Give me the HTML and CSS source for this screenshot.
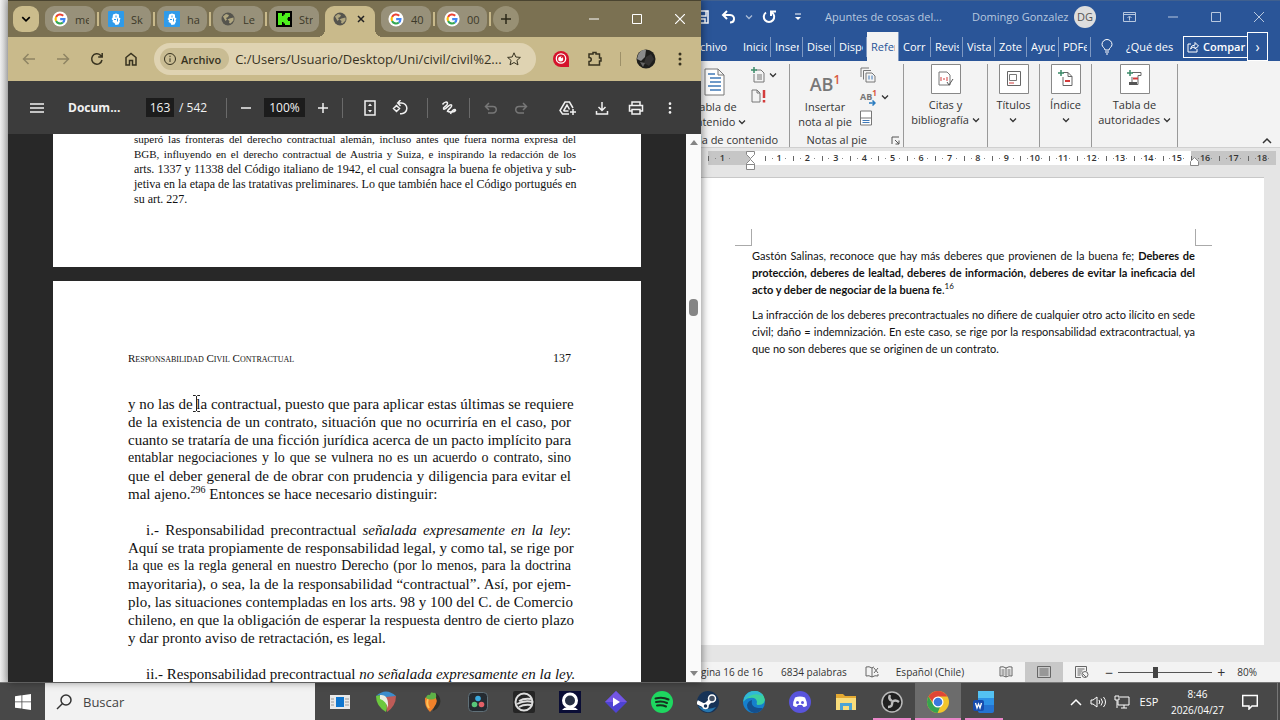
FILE: index.html
```
<!DOCTYPE html>
<html lang="es">
<head>
    <meta charset="UTF-8">
    <meta name="viewport" content="width=device-width, initial-scale=1.0">
    <title>Escritorio</title>
    <link rel="stylesheet" href="styles.css">
</head>
<body>
    <svg class="defs" width="0" height="0" aria-hidden="true">
        <symbol id="google" viewBox="0 0 18 18">
            <circle cx="9" cy="9" r="8.5" fill="#fff"/>
            <g fill="none" stroke-width="2.4">
                <path d="M12.6 5.4A5 5 0 0 0 4.6 6.700" stroke="#ea4335"/>
                <path d="M4.600 6.700A5 5 0 0 0 4.600 11.300" stroke="#fbbc05"/>
                <path d="M4.600 11.300A5 5 0 0 0 12.200 12.900" stroke="#34a853"/>
                <path d="M12.200 12.900A5 5 0 0 0 14 9.200H9.200" stroke="#4285f4"/>
            </g>
        </symbol>
        <symbol id="skeb" viewBox="0 0 16 16">
            <rect width="16" height="16" rx="1" fill="#2f9bea"/>
            <path d="M5 3.500L8 2.500l3 1v3l1.500 1-1 2 .5 1-1.500 3-3 .5-1-2-2-1 .5-1.500-1.500-1.500 1-1z" fill="#fff"/>
            <path d="M8 4.500v2M6 8.500h2M9.500 7.500v3" stroke="#2f9bea"/>
        </symbol>
        <symbol id="globe" viewBox="0 0 16 16">
            <circle cx="8" cy="8" r="6.500" fill="#55544d"/>
            <path d="M3 5.500l3-2.500 3 1-1 2-2 1 1 1.500-1.500 1.500zM9.500 7.500l4-1v3l-3 3-1.500-.5.500-2-2-1.500z" fill="#b0a67f"/>
        </symbol>
        <symbol id="caret" viewBox="0 0 8 8"><path d="M1 2.500l3 3 3-3" fill="none" stroke="currentColor" stroke-width="1.300"/></symbol>
        <symbol id="dots" viewBox="0 0 16 16"><g fill="currentColor"><circle cx="8" cy="3" r="1.500"/><circle cx="8" cy="8" r="1.500"/><circle cx="8" cy="13" r="1.500"/></g></symbol>
    </svg>

    <main class="windows">
        <div class="behind"></div>

        <!-- Chrome -->
        <section class="chrome">
            <div class="tabstrip">
                <button class="tab-search" aria-label="Buscar pestañas"><svg width="10" height="10"><use href="#caret"/></svg></button>
                <button class="tab"><svg width="16" height="16"><use href="#google"/></svg><span>me</span></button>
                <i></i>
                <button class="tab"><svg width="16" height="16"><use href="#skeb"/></svg><span>Sk</span></button>
                <i></i>
                <button class="tab"><svg width="16" height="16"><use href="#skeb"/></svg><span>ha</span></button>
                <i></i>
                <button class="tab"><svg width="16" height="16"><use href="#globe"/></svg><span>Le</span></button>
                <i></i>
                <button class="tab"><svg width="16" height="16" viewBox="0 0 16 16"><path d="M0 0h16v16H0z"/><path d="M2 2h4v3h1.500V3.500H9V2h5v4h-2v1.500h-1v1h1V10h2v4H9v-1.500H7.500V11H6v3H2z" fill="#4df01c"/></svg><span>Str</span></button>
                <div class="tab active">
                    <svg width="16" height="16"><use href="#globe"/></svg>
                    <button aria-label="Cerrar pestaña"><svg width="8" height="8" viewBox="0 0 8 8"><path d="M1 1l6 6M7 1L1 7" stroke="#222" stroke-width="1.500"/></svg></button>
                </div>
                <button class="tab"><svg width="16" height="16"><use href="#google"/></svg><span>40</span></button>
                <i></i>
                <button class="tab"><svg width="16" height="16"><use href="#google"/></svg><span>00</span></button>
                <i></i>
                <button class="new-tab" aria-label="Nueva pestaña"><svg width="10" height="10" viewBox="0 0 10 10"><path d="M5 0v10M0 5h10" stroke="#2b2818" stroke-width="1.500"/></svg></button>
                <div class="controls">
                    <button aria-label="Minimizar"><svg width="10" height="10" viewBox="0 0 10 10"><path d="M0 5h10" stroke="#fff"/></svg></button>
                    <button aria-label="Maximizar"><svg width="10" height="10" viewBox="0 0 10 10"><path d="M.5.500h9v9h-9z" fill="none" stroke="#fff"/></svg></button>
                    <button aria-label="Cerrar"><svg width="10" height="10" viewBox="0 0 10 10"><path d="M0 0l10 10M10 0L0 10" stroke="#fff" stroke-width="1.200"/></svg></button>
                </div>
            </div>

            <div class="navbar">
                <button class="off" aria-label="Atrás"><svg width="16" height="16" viewBox="0 0 16 16"><path d="M14 8H3M7.500 3L2.500 8l5 5" class="line thick"/></svg></button>
                <button class="off" aria-label="Adelante"><svg width="16" height="16" viewBox="0 0 16 16"><path d="M2 8h11M8.500 3l5 5-5 5" class="line thick"/></svg></button>
                <button aria-label="Recargar"><svg width="16" height="16" viewBox="0 0 16 16"><path d="M13 9a5.200 5.200 0 1 1-1.500-4.800L13 5.700M13.200 2v4h-4" class="line thick"/></svg></button>
                <button aria-label="Inicio"><svg width="16" height="16" viewBox="0 0 16 16"><path d="M3 14V6.500L8 2.500l5 4V14H9.500V9.500h-3V14z" class="line thick"/></svg></button>
                <div class="omnibox">
                    <button class="chip"><svg width="14" height="14" viewBox="0 0 14 14"><circle cx="7" cy="7" r="5.500" class="line"/><path d="M7 6.300V10M7 3.700v1.400" class="line"/></svg>Archivo</button>
                    <input type="text" aria-label="Dirección" value="C:/Users/Usuario/Desktop/Uni/civil/civil%2...">
                    <button class="star" aria-label="Marcador"><svg width="16" height="16" viewBox="0 0 16 16"><path d="M8 1.800l1.800 4.200 4.600.4-3.500 3 1.100 4.500L8 11.500l-4 2.400 1.100-4.500-3.500-3 4.600-.4z" class="line"/></svg></button>
                </div>
                <button class="ext" aria-label="Extensión"><svg width="16" height="16" viewBox="0 0 16 16"><path d="M8 0a8 8 0 0 1 8 8v8H8A8 8 0 0 1 8 0z" fill="#d5122b"/><circle cx="8" cy="7.500" r="4.700" fill="none" stroke="#fff" stroke-width="1.300"/><circle cx="7.700" cy="8" r="2.500" fill="#fff"/><path d="M8 7l2.500-2" stroke="#d5122b"/></svg></button>
                <button aria-label="Extensiones"><svg width="18" height="18" viewBox="0 0 18 18"><path d="M3 4h4V2.500h3V4h3.500v4H15v3h-1.500v4H3v-3.500c3 0 3-4 0-4z" class="line thick"/></svg></button>
                <i></i>
                <button aria-label="Perfil"><svg width="20" height="20" viewBox="0 0 20 20"><circle cx="10" cy="10" r="9.500" fill="#1e1e1c"/><path d="M2 6Q5 0 10 1l-1 7-4 4-4-2z" fill="#8a8b8b"/><path d="M10 8l5-3 3 5-5 7-5-3z" fill="#343333"/><path d="M4 13l5 1-2 4z" fill="#666"/></svg></button>
                <button aria-label="Menú"><svg width="16" height="16"><use href="#dots"/></svg></button>
            </div>

            <div class="pdfbar">
                <div class="pdf-name">
                    <button aria-label="Índice"><svg width="14" height="12" viewBox="0 0 14 12"><path d="M0 2h14M0 6h14M0 10h14" class="line thick"/></svg></button>
                    <strong>Docum...</strong>
                </div>
                <div class="pdf-page"><input type="text" aria-label="Página" value="163"><span>/ 542</span></div>
                <i></i>
                <div class="pdf-zoom">
                    <button aria-label="Alejar"><svg width="12" height="12" viewBox="0 0 12 12"><path d="M1 6h10" class="line thick"/></svg></button>
                    <input type="text" aria-label="Zoom" value="100%">
                    <button aria-label="Acercar"><svg width="12" height="12" viewBox="0 0 12 12"><path d="M1 6h10M6 1v10" class="line thick"/></svg></button>
                </div>
                <i></i>
                <div class="pdf-view">
                    <button aria-label="Ajustar"><svg width="16" height="16" viewBox="0 0 16 16"><path d="M3 1h10v14H3z" class="line thick"/><path d="M8 3.500L10 6H6zM8 12.500L10 10H6z" fill="currentColor"/></svg></button>
                    <button aria-label="Girar"><svg width="16" height="16" viewBox="0 0 16 16"><path d="M4.500 5.500L1.500 8.500l3 3 3-3zM6 3h3.500a5.300 5.300 0 0 1 0 10.700H8M8.500 0L5.700 3l2.800 3" class="line thick"/></svg></button>
                </div>
                <i></i>
                <button aria-label="Dibujar"><svg width="16" height="16" viewBox="0 0 16 16"><path d="M1.500 4.500C3 2 6.500 1 6.500 3.500S1.500 7 2.500 9 9 3 10.500 5 5.500 10 6.500 12M9.500 14c1-4 5-6 5-3.500-1 1.500-5 2-7.500 1" class="line thick"/></svg></button>
                <i></i>
                <div class="pdf-view off">
                    <button aria-label="Deshacer"><svg width="14" height="14" viewBox="0 0 14 14"><path d="M4 12h5a3.200 3.200 0 0 0 0-6.500H2M5 2L1.500 5.500 5 9" class="line thick"/></svg></button>
                    <button aria-label="Rehacer"><svg width="14" height="14" viewBox="0 0 14 14"><path d="M10 12H5a3.200 3.200 0 0 1 0-6.500h7M9 2l3.500 3.500L9 9" class="line thick"/></svg></button>
                </div>
                <div class="pdf-actions">
                    <button aria-label="Guardar en Drive"><svg width="18" height="16" viewBox="0 0 18 16"><path d="M10 14H3.500L1 10.500 6 2h4.500l3.500 6M4.500 11h5M4.500 11l3.500-6 2.500 4.500M14 9v6M11 12h6" class="line thick"/></svg></button>
                    <button aria-label="Descargar"><svg width="14" height="14" viewBox="0 0 14 14"><path d="M7 1v8M3.500 6L7 9.500 10.500 6M1.500 10v3h11v-3" class="line thick"/></svg></button>
                    <button aria-label="Imprimir"><svg width="16" height="16" viewBox="0 0 16 16"><path d="M4 5V2h8v3M4 11H1.500V5.500h13V11H12M4 9.500h8V14H4z" class="line thick"/></svg></button>
                    <button aria-label="Más"><svg width="14" height="14"><use href="#dots"/></svg></button>
                </div>
            </div>

            <div class="viewer">
                <div class="pages">
                    <article class="page note">
                        <p>
                            <span class="tight">superó las fronteras del derecho contractual alemán, incluso antes que fuera norma expresa del</span>
                            <span class="tight">BGB, influyendo en el derecho contractual de Austria y Suiza, e inspirando la redacción de los</span>
                            <span>arts. 1337 y 11338 del Código italiano de 1942, el cual consagra la buena fe objetiva y sub-</span>
                            <span>jetiva en la etapa de las tratativas preliminares. Lo que también hace el Código portugués en</span>
                            <span class="end">su art. 227.</span>
                        </p>
                    </article>
                    <article class="page body">
                        <header><span class="caps">Responsabilidad Civil Contractual</span><span>137</span></header>
                        <p>
                            <span>y no las de la contractual, puesto que para aplicar estas últimas se requiere</span>
                            <span>de la existencia de un contrato, situación que no ocurriría en el caso, por</span>
                            <span>cuanto se trataría de una ficción jurídica acerca de un pacto implícito para</span>
                            <span class="tight">entablar negociaciones y lo que se vulnera no es un acuerdo o contrato, sino</span>
                            <span>que el deber general de de obrar con prudencia y diligencia para evitar el</span>
                            <span class="end">mal ajeno.<sup>296</sup> Entonces se hace necesario distinguir:</span>
                        </p>
                        <p>
                            <span class="indent">i.- Responsabilidad precontractual <em>señalada expresamente en la ley</em>:</span>
                            <span>Aquí se trata propiamente de responsabilidad legal, y como tal, se rige por</span>
                            <span class="tight">la que es la regla general en nuestro Derecho (por lo menos, para la doctrina</span>
                            <span>mayoritaria), o sea, la de la responsabilidad “contractual”. Así, por ejem-</span>
                            <span>plo, las situaciones contempladas en los arts. 98 y 100 del C. de Comercio</span>
                            <span>chileno, en que la obligación de esperar la respuesta dentro de cierto plazo</span>
                            <span class="end">y dar pronto aviso de retractación, es legal.</span>
                        </p>
                        <p>
                            <span class="indent">ii.- Responsabilidad precontractual <em>no señalada expresamente en la ley.</em></span>
                        </p>
                        <svg class="cursor" width="9" height="17" viewBox="0 0 9 17"><path d="M1 .5h2.500l1 1 1-1H8M4.500 1v15M1 16.500h2.500l1-1 1 1H8" fill="none" stroke="#222"/></svg>
                    </article>
                </div>
                <div class="scroll"><b class="up"></b><b class="thumb"></b><b class="down"></b></div>
            </div>
        </section>

        <!-- Word -->
        <section class="word">
            <div class="word-title">
                <div class="quick">
                    <button aria-label="Guardar"><svg width="14" height="14" viewBox="0 0 14 14"><path d="M1 1h12v12H1zM3 1v5h8V1M4 13V9h6v4" class="line thick"/></svg></button>
                    <button aria-label="Deshacer"><svg width="16" height="16" viewBox="0 0 16 16"><path d="M6 2L2 6l4 4M2 6h7q4.500.5 4 4.500-.5 3-4 3" fill="none" stroke="#fff" stroke-width="2"/></svg></button>
                    <button aria-label="Opciones de deshacer"><svg width="8" height="8" opacity=".6"><use href="#caret"/></svg></button>
                    <button aria-label="Repetir"><svg width="16" height="16" viewBox="0 0 16 16"><path d="M11 3.500a5.200 5.200 0 1 1-6 0M10 7V2.500h5" fill="none" stroke="#fff" stroke-width="2"/></svg></button>
                    <button aria-label="Personalizar"><svg width="8" height="8" viewBox="0 0 8 8"><path d="M1 1h6" stroke="#fff"/><path d="M1 4h6L4 7z" fill="#fff"/></svg></button>
                </div>
                <span class="file">Apuntes de cosas del...</span>
                <span class="user">Domingo Gonzalez</span>
                <button class="avatar">DG</button>
                <div class="controls">
                    <button aria-label="Opciones de la cinta"><svg width="13" height="10" viewBox="0 0 13 10"><path d="M.5.500h12v9H.5zM.5 2.500h12M6.500 8.500v-4M4.500 6l2-2 2 2" class="line"/></svg></button>
                    <button aria-label="Minimizar"><svg width="10" height="10" viewBox="0 0 10 10"><path d="M0 5h10" class="line"/></svg></button>
                    <button aria-label="Maximizar"><svg width="10" height="10" viewBox="0 0 10 10"><path d="M.5.500h9v9h-9z" class="line"/></svg></button>
                    <button aria-label="Cerrar"><svg width="10" height="10" viewBox="0 0 10 10"><path d="M0 0l10 10M10 0L0 10" class="line"/></svg></button>
                </div>
            </div>

            <nav class="ribbon-tabs">
                <button class="rfile">chivo</button>
                <button class="rtab"><span>Inicio</span></button>
                <button class="rtab"><span>Inser</span></button>
                <button class="rtab"><span>Diseñ</span></button>
                <button class="rtab"><span>Dispo</span></button>
                <button class="rtab current"><span>Refer</span></button>
                <button class="rtab"><span>Corr</span></button>
                <button class="rtab"><span>Revis</span></button>
                <button class="rtab"><span>Vista</span></button>
                <button class="rtab"><span>Zote</span></button>
                <button class="rtab"><span>Ayud</span></button>
                <button class="rtab"><span>PDFe</span></button>
                <button class="tell"><svg width="12" height="16" viewBox="0 0 12 16"><path d="M4 11C4 9 1 8 1 5.500a5 5 0 0 1 10 0C11 8 8 9 8 11zM4 13h4M5 15h2" class="line"/></svg><span>¿Qué des</span></button>
                <button class="share"><svg width="12" height="12" viewBox="0 0 12 12"><path d="M4 3H1v8h9V8M3.500 8Q4 4 8 4V1.500L11.500 5 8 8V6Q5 6 3.500 8z" class="line"/></svg><span>Compar</span></button>
                <button class="more">›</button>
            </nav>

            <div class="ribbon">
                <div class="group toc">
                    <div class="tools">
                        <button class="big toc-big">
                            <svg width="22" height="28" viewBox="0 0 22 28"><path d="M1 1h13l6 6v20H1zM14 1v6h6" fill="#fff" stroke="#777"/><path d="M4 6h7M6 10h11M6 14h11M4 18h13M6 22h11" stroke="#3f79b8" stroke-width="1.500"/></svg>
                            <span>Tabla de<br>contenido <svg width="8" height="8"><use href="#caret"/></svg></span>
                        </button>
                        <div class="small">
                            <button aria-label="Agregar texto"><svg width="14" height="16" viewBox="0 0 14 16"><path d="M5 3h5l3 3v9H3V7M6 8h5M6 10h5M6 12h5" fill="none" stroke="#777"/><path d="M3 0v6M0 3h6" stroke="#3a8a68" stroke-width="1.500"/></svg><svg width="8" height="8"><use href="#caret"/></svg></button>
                            <button aria-label="Actualizar tabla"><svg width="15" height="14" viewBox="0 0 15 14"><path d="M1 1h5l3 3v9H1zM6 1v3h3" fill="none" stroke="#777"/><path d="M13 1v8M13 11v2.500" stroke="#d33c3c" stroke-width="2.500"/></svg></button>
                        </div>
                    </div>
                    <div class="label">bla de contenido</div>
                </div>
                <div class="group notes">
                    <div class="tools">
                        <button class="big">
                            <span class="ab">AB<sup>1</sup></span>
                            <span>Insertar<br>nota al pie</span>
                        </button>
                        <div class="small">
                            <button aria-label="Nota al final"><svg width="16" height="16" viewBox="0 0 16 16"><path d="M1 10V1h8M3.500 12.500v-9H11M6 15V6h6l3 3v6z" fill="none" stroke="#777"/><path d="M9 8.500v4M12 8.500v4" stroke="#3f79b8"/></svg></button>
                            <button class="next-note" aria-label="Siguiente nota"><span class="ab-mini">AB<sup>1</sup></span><svg width="8" height="8"><use href="#caret"/></svg><svg class="arrow" width="7" height="6" viewBox="0 0 7 6"><path d="M0 3h6M3.500.5L6 3 3.500 5.500" fill="none" stroke="#2b7cc0" stroke-width="1.500"/></svg></button>
                            <button aria-label="Mostrar notas"><svg width="12" height="16" viewBox="0 0 12 16"><path d="M.5 1h11v14H.5zM.5 8h11" fill="#fff" stroke="#777"/><path d="M2.500 10.500h7M2.500 12.500h7" stroke="#3f79b8"/></svg></button>
                        </div>
                    </div>
                    <div class="label">Notas al pie <svg width="9" height="9" viewBox="0 0 9 9"><path d="M1 8V1h7M4 4l4 4M8 4.500V8H4.500" fill="none" stroke="#555"/></svg></div>
                </div>
                <div class="group cites">
                    <button class="big boxed">
                        <svg width="30" height="30" viewBox="0 0 30 30"><path d="M.5.500h29v29H.5z" fill="#fff" stroke="#888"/><path d="M8 8h8l3 3v10H8z" fill="none" stroke="#777"/><path d="M10 13v4M16 13v4M12 15h2" stroke="#d33c3c"/><path d="M16 18l2 3 4-6" fill="none" stroke="#555"/></svg>
                        <span>Citas y<br>bibliografía <svg width="8" height="8"><use href="#caret"/></svg></span>
                    </button>
                </div>
                <div class="group titles">
                    <button class="big boxed">
                        <svg width="30" height="30" viewBox="0 0 30 30"><path d="M.5.500h29v29H.5z" fill="#fff" stroke="#888"/><path d="M8.500 7.500h13v14h-13z" fill="none" stroke="#666"/><path d="M10.500 10.500h7v6h-7z" fill="none" stroke="#777"/><path d="M10 19h5" stroke="#d33c3c"/></svg>
                        <span>Títulos<br><svg width="8" height="8"><use href="#caret"/></svg></span>
                    </button>
                </div>
                <div class="group titles">
                    <button class="big boxed">
                        <svg width="30" height="30" viewBox="0 0 30 30"><path d="M.5.500h29v29H.5z" fill="#fff" stroke="#888"/><path d="M12 8.500h5l4 4v9h-9V13M17 8.500v4h4" fill="none" stroke="#666"/><path d="M10 6v6M7 9h6" stroke="#3a8a68" stroke-width="1.500"/><path d="M14 17h5" stroke="#d33c3c" stroke-width="2"/></svg>
                        <span>Índice<br><svg width="8" height="8"><use href="#caret"/></svg></span>
                    </button>
                </div>
                <div class="group auth">
                    <button class="big boxed">
                        <svg width="30" height="30" viewBox="0 0 30 30"><path d="M.5.500h29v29H.5z" fill="#fff" stroke="#888"/><path d="M12 8.500h9v3h-3v9h-6V13" fill="none" stroke="#666"/><path d="M9 18h8v3H9z" fill="#555"/><path d="M10 6v6M7 9h6" stroke="#3a8a68" stroke-width="1.500"/><path d="M13 14.500h5" stroke="#d33c3c" stroke-width="2"/></svg>
                        <span>Tabla de<br>autoridades <svg width="8" height="8"><use href="#caret"/></svg></span>
                    </button>
                </div>
                <button class="collapse" aria-label="Contraer la cinta"><svg width="10" height="8" viewBox="0 0 10 8"><path d="M1 6l4-4 4 4" class="line thick"/></svg></button>
            </div>

            <div class="ruler">
                <span class="out">1</span><span class="zero"><svg width="9" height="20" viewBox="0 0 9 20"><path d="M.5.500h8v3l-4 4-4-4zM4.500 8.500l4 4v6h-8v-6zM.5 13.500h8" fill="#fff" stroke="#888"/></svg></span><span>1</span><span>2</span><span>3</span><span>4</span><span>5</span><span>6</span><span>7</span><span>8</span><span>9</span><span>10</span><span>11</span><span>12</span><span>13</span><span>14</span><span>15</span><span class="out edge"><svg width="9" height="9" viewBox="0 0 9 9"><path d="M4.500.500l4 4v4h-8v-4z" fill="#fff" stroke="#888"/></svg>16</span><span class="out">17</span><span class="out">18</span>
            </div>

            <div class="canvas">
                <article class="sheet">
                    <div class="corners"><b></b><b></b></div>
                    <p>
                        <span>Gastón Salinas, reconoce que hay más deberes que provienen de la buena fe; <strong>Deberes de</strong></span>
                        <span><strong>protección, deberes de lealtad, deberes de información, deberes de evitar la ineficacia del</strong></span>
                        <span class="end"><strong>acto y deber de negociar de la buena fe</strong>.<sup>16</sup></span>
                    </p>
                    <p>
                        <span>La infracción de los deberes precontractuales no difiere de cualquier otro acto ilícito en sede</span>
                        <span>civil; daño = indemnización. En este caso, se rige por la responsabilidad extracontractual, ya</span>
                        <span class="end">que no son deberes que se originen de un contrato.</span>
                    </p>
                </article>
            </div>

            <footer class="status">
                <span class="pageno">gina 16 de 16</span>
                <span>6834 palabras</span>
                <svg width="14" height="12" viewBox="0 0 14 12"><path d="M7 2Q4 0 1 1v9q3-1 6 1zM7 2q1-1 2-1M7 11q3-2 6-1V8M9 2l4 5M13 2L9 7" class="line"/></svg>
                <span>Español (Chile)</span>
                <div class="views">
                    <button aria-label="Modo de lectura"><svg width="14" height="12" viewBox="0 0 14 12"><path d="M7 2Q4 0 1 1v9q3-1 6 1 3-2 6-1V1Q10 0 7 2zv9M2.500 4h3M2.500 6h3M2.500 8h3M8.500 4h3M8.500 6h3M8.500 8h3" class="line"/></svg></button>
                    <button class="on" aria-label="Diseño de impresión"><svg width="14" height="12" viewBox="0 0 14 12"><path d="M.5.500h13v11H.5zM2.500 3h9M2.500 5h9M2.500 7h9M2.500 9h9" class="line"/></svg></button>
                    <button aria-label="Diseño web"><svg width="14" height="12" viewBox="0 0 14 12"><path d="M6 11.500H.5V.5h11V5M2.500 3h7M2.500 5h5M2.500 7h4M2.500 9h3" class="line"/><circle cx="10" cy="8.500" r="3" class="line"/><path d="M8 8l3 3" class="line"/></svg></button>
                </div>
                <div class="zoom"><button aria-label="Alejar">−</button><input type="range" min="10" max="190" value="80" aria-label="Zoom del documento"><button aria-label="Acercar">+</button><span>80%</span></div>
            </footer>
        </section>
    </main>

    <!-- barra de tareas -->
    <footer class="taskbar">
        <button class="start" aria-label="Inicio"><svg width="16" height="16" viewBox="0 0 16 16"><path d="M0 2.200L6.500 1.300v6.200H0zM7.300 1.200L16 0v7.500H7.300zM0 8.300h6.500v6.300L0 13.700zM7.300 8.300H16V16l-8.700-1.200z" fill="#fff"/></svg></button>
        <label class="search"><svg width="16" height="16" viewBox="0 0 16 16"><circle cx="10" cy="6" r="5" class="line thick"/><path d="M6.500 9.500L1 15" class="line thick"/></svg><input type="text" placeholder="Buscar" aria-label="Buscar"></label>
        <div class="apps">
            <button aria-label="Vista previa"><svg width="20" height="14" viewBox="0 0 20 14"><path d="M0 0h20v14H0z" fill="#e9e9e9"/><path d="M6 2h8v10H6z" fill="#0f76cf"/><path d="M1 4h3M1 7h3M1 10h3M15 4h4M15 7h4M15 10h4" stroke="#999"/></svg></button>
            <button aria-label="Revo"><svg width="22" height="22" viewBox="0 0 22 22"><path d="M1 5Q11-4 21 5l-8 3L6 4z" fill="#3b8dcc"/><path d="M1 5l5-1 7 9-2 8Q1 15 1 5z" fill="#6cc83e"/><path d="M11 6l10-1q0 10-9 16z" fill="#be5b57"/><path d="M5 4q9-1 8 13-2-7-8-9z" fill="#e8eee4"/></svg></button>
            <button aria-label="FL Studio"><svg width="22" height="22" viewBox="0 0 22 22"><path d="M15 2q6 5 4 11-2 5-7 7z" fill="#30312c"/><path d="M4 7q5-4 11 0 3 5-6 14Q3 15 4 7z" fill="#f0822a"/><path d="M7 8q-2 5 1 9" stroke="#ffc058" stroke-width="2" fill="none"/><path d="M5 7q1-4 4-3 1-4 3-2 4-1 3 5-5 3-10 0z" fill="#5eb247"/></svg></button>
            <button aria-label="DaVinci Resolve"><svg width="20" height="20" viewBox="0 0 20 20"><rect x=".5" y=".5" width="19" height="19" rx="4" fill="#252b31" stroke="#607078"/><circle cx="10" cy="6.500" r="2.800" fill="#39a9df"/><circle cx="6.500" cy="12.500" r="2.800" fill="#58c77a"/><circle cx="13.500" cy="12.500" r="2.800" fill="#e36067"/></svg></button>
            <button aria-label="Editor"><svg width="22" height="22" viewBox="0 0 22 22"><rect width="22" height="22" rx="2" fill="#252525"/><circle cx="11" cy="11" r="8.500" fill="none" stroke="#ddd" stroke-width="2"/><path d="M6 10q5-3 12-2M4 13q7-4 16-2M6 16q5-3 12-2" stroke="#ddd" stroke-width="2" fill="none"/></svg></button>
            <button aria-label="Cámara"><svg width="22" height="22" viewBox="0 0 22 22"><path d="M0 0h22v22H0z" fill="#0a0d35"/><circle cx="11" cy="9.500" r="6.500" fill="#283044" stroke="#fff" stroke-width="3"/><path d="M3 19q3-4 8-2 5-2 8 2z" fill="#fff"/></svg></button>
            <button aria-label="Reproductor"><svg width="22" height="22" viewBox="0 0 22 22"><path d="M11 0l11 11-11 11L0 11z" fill="#4e43d3"/><path d="M11 0l11 11H0z" fill="#7456e4"/><path d="M8 6.500l7 4.500-7 4.500z" fill="#fff"/></svg></button>
            <button aria-label="Spotify"><svg width="22" height="22" viewBox="0 0 22 22"><circle cx="11" cy="11" r="11" fill="#1ed760"/><path d="M4.500 7.500q7-2 13 1M5 11q6-1.500 11 1M6 14.500q5-1 9 1" stroke="#17301f" stroke-width="2" stroke-linecap="round" fill="none"/></svg></button>
            <button aria-label="Steam"><svg width="22" height="22" viewBox="0 0 22 22"><circle cx="11" cy="11" r="11" fill="#173357"/><path d="M1 15q9 5 18 1-8 11-18-1z" fill="#2676ae"/><path d="M0 11l8 4 6-6" stroke="#fff" stroke-width="4" fill="none"/><circle cx="15" cy="7.500" r="3.500" fill="#435064" stroke="#fff" stroke-width="1.500"/><circle cx="8.500" cy="15" r="2.500" fill="#173357" stroke="#fff" stroke-width="1.500"/></svg></button>
            <button aria-label="Edge"><svg width="22" height="22" viewBox="0 0 22 22"><circle cx="11" cy="11" r="11" fill="#1680cc"/><path d="M1 8Q4 0 12 0q9 1 10 9-1 5-7 5-2 0-1-3-1-5-7-4Q3 7 0 11z" fill="#3bd0a0"/><path d="M1 7Q4 0 12 0q5 0 8 5Q9 0 1 10z" fill="#31b9d6"/><path d="M9 9q-2 9 11 8-3 5-9 5-7-2-7-8 1-4 5-5z" fill="#14508e"/></svg></button>
            <button aria-label="Discord"><svg width="22" height="22" viewBox="0 0 22 22"><circle cx="11" cy="11" r="11" fill="#5954dc"/><path d="M6 6.500q5-2 10 0 2 4 2 8-2 1.500-3.500 1.500L13 14H9l-1.500 2Q6 16 4 14.500q0-4 2-8z" fill="#fff"/><circle cx="8.500" cy="11.500" r="1.500" fill="#5954dc"/><circle cx="13.500" cy="11.500" r="1.500" fill="#5954dc"/></svg></button>
            <button aria-label="Explorador"><svg width="20" height="18" viewBox="0 0 20 18"><path d="M0 1h7l2 2h11v14H0z" fill="#e5aa32"/><path d="M0 5h20v12H0z" fill="#f8dc7b"/><path d="M4 10h12v7h-3v-4H7v4H4z" fill="#4ba3d5"/></svg></button>
            <button class="open" aria-label="OBS"><svg width="22" height="22" viewBox="0 0 22 22"><circle cx="11" cy="11" r="10" fill="#202020" stroke="#bbb" stroke-width="1.500"/><g fill="none" stroke="#bbb" stroke-width="2.500"><path d="M9 4q-2 4 2 6"/><path d="M18 11q-4-3-7 0"/><path d="M7 16q5 0 4-5"/></g></svg></button>
            <button class="open focus" aria-label="Chrome"><svg width="22" height="22" viewBox="0 0 22 22"><circle cx="11" cy="11" r="11" fill="#f2c52c"/><path d="M1.500 5.500A11 11 0 0 1 20.500 5.500H11L8 14z" fill="#df4636"/><path d="M1.500 5.500l5 8.500 7 1-3 7A11 11 0 0 1 1.500 5.500z" fill="#36a350"/><circle cx="11" cy="11" r="5.500" fill="#fff"/><circle cx="11" cy="11" r="4.300" fill="#3b78dc"/></svg></button>
            <button class="open" aria-label="Word"><svg width="22" height="22" viewBox="0 0 22 22"><rect x="5" width="16" height="22" rx="2" fill="#2473d2"/><path d="M5 0h16v7H5z" fill="#54c2f2"/><path d="M5 7h16v7H5z" fill="#2d91e5"/><rect y="9" width="11" height="11" rx="2" fill="#174cae"/><path d="M2.500 12l1.500 5 1.500-4 1.500 4 1.500-5" stroke="#fff" fill="none" stroke-width="1.300"/></svg></button>
        </div>
        <div class="tray">
            <button aria-label="Iconos ocultos"><svg width="12" height="8" viewBox="0 0 12 8"><path d="M1 7l5-5 5 5" class="line thick"/></svg></button>
            <button aria-label="Volumen"><svg width="17" height="14" viewBox="0 0 17 14"><path d="M1 5h2l4-3v10L3 9H1zM9 5q1.500 2 0 4M11 3.500q3 3.500 0 7M13.500 2q4 5 0 10" class="line"/></svg></button>
            <button aria-label="Red"><svg width="16" height="14" viewBox="0 0 16 14"><path d="M6 2h9v8H4V6M7 13h6M10 10v3M1 1h4v4H1zM3 5v8" class="line"/></svg></button>
            <button class="lang">ESP</button>
            <button class="clock">8:46<br>2026/04/27</button>
            <button class="bell" aria-label="Notificaciones"><svg width="16" height="16" viewBox="0 0 16 16"><path d="M.7 1.500h14.600v10.500H10L7 15v-3H.7z" class="line thick"/></svg></button>
        </div>
    </footer>
</body>
</html>
```
FILE: styles.css
```
* {
    box-sizing: border-box;
}
body {
    margin: 0;
    height: 100vh;
    display: flex;
    flex-direction: column;
    overflow: hidden;
    font-family: "Open Sans", "Noto Sans", sans-serif;
    font-size: 12px;
}
.defs {
    position: absolute;
}
button, input {
    font: inherit;
    color: inherit;
    background: none;
    border: 0;
    padding: 0;
    margin: 0;
    min-width: 0;
}
button {
    display: flex;
    align-items: center;
    justify-content: center;
    flex-shrink: 0;
}
svg {
    flex-shrink: 0;
}
.line {
    fill: none;
    stroke: currentColor;
    stroke-width: 1;
}
.thick {
    stroke-width: 1.5;
}
.windows {
    flex: 1;
    min-height: 0;
    display: grid;
    grid-template-columns: 8px 693fr 579fr;
}
.behind {
    background: linear-gradient(to right, #f0f0f0, #c8c8c8);
}

/* Chrome */
.chrome {
    display: flex;
    flex-direction: column;
    min-width: 0;
    min-height: 0;
    z-index: 1;
    box-shadow: 1px 0 8px rgba(0, 0, 0, 0.45);
}
.tabstrip {
    height: 37px;
    display: flex;
    align-items: center;
    padding-left: 5px;
    background: #7b7152;
    border-top: 1px solid #4a4430;
}
.tabstrip > i {
    width: 2px;
    height: 14px;
    margin: 0 2px;
    background: #c9ba8b;
}
.tab-search, .new-tab {
    width: 26px;
    height: 26px;
    border-radius: 9px;
    background: #cbbc8c;
}
.tab-search {
    margin-right: 6px;
}
.new-tab {
    border-radius: 13px;
    background: #989074;
}
.tab {
    width: 50px;
    height: 26px;
    padding-left: 7px;
    justify-content: flex-start;
    gap: 7px;
    border-radius: 9px;
    background: #98917a;
    color: #3c3929;
    font-size: 11px;
}
.tab span {
    width: 14px;
    overflow: hidden;
    white-space: nowrap;
    text-align: left;
}
.tab.active {
    display: flex;
    align-items: center;
    align-self: flex-end;
    gap: 9px;
    height: 31px;
    padding-bottom: 5px;
    margin: 0 6px;
    border-radius: 9px 9px 0 0;
    background: #c9ba8b;
    position: relative;
}
.tab.active::before, .tab.active::after {
    content: "";
    position: absolute;
    bottom: 0;
    left: -8px;
    width: 8px;
    height: 8px;
    background: radial-gradient(circle at 0 0, transparent 8px, #c9ba8b 8px);
}
.tab.active::after {
    left: auto;
    right: -8px;
    background: radial-gradient(circle at 100% 0, transparent 8px, #c9ba8b 8px);
}
.controls {
    margin-left: auto;
    display: flex;
}
.controls button {
    width: 43px;
    height: 30px;
}
.navbar {
    height: 44px;
    display: flex;
    align-items: center;
    padding: 0 4px;
    background: #c9ba8b;
    color: #37321f;
}
.navbar > button {
    width: 34px;
    height: 34px;
}
.navbar .off {
    color: #8f8463;
}
.navbar > i {
    width: 1px;
    height: 14px;
    margin: 0 8px;
    background: #9d9068;
}
.omnibox {
    flex: 1;
    height: 32px;
    margin: 0 8px 0 6px;
    padding: 0 12px 0 6px;
    display: flex;
    align-items: center;
    border-radius: 16px;
    background: #dfd3b2;
    font-size: 13px;
}
.omnibox .chip {
    height: 22px;
    padding: 0 8px 0 3px;
    gap: 4px;
    border-radius: 11px;
    background: #c9bc93;
    font-size: 11px;
    font-weight: 600;
}
.omnibox input {
    flex: 1;
    margin-left: 6px;
}
.omnibox .star {
    width: 20px;
}
.pdfbar {
    height: 53px;
    display: flex;
    align-items: center;
    padding: 0 16px 0 22px;
    background: #3c3c3c;
    color: #f1f1f1;
    font-size: 12px;
}
.pdfbar > i {
    width: 1px;
    height: 20px;
    background: #6a6a6a;
}
.pdfbar button {
    width: 30px;
    height: 30px;
}
.pdfbar input {
    height: 19px;
    background: #1c1c1c;
    text-align: center;
}
.pdf-name, .pdf-page, .pdf-zoom, .pdf-view, .pdf-actions {
    display: flex;
    align-items: center;
}
.pdf-name button {
    width: 14px;
}
.pdf-name strong {
    margin-left: 24px;
    width: 78px;
}
.pdf-page input {
    width: 28px;
}
.pdf-page span {
    width: 52px;
    padding-left: 5px;
}
.pdf-zoom {
    padding: 0 4px;
}
.pdf-zoom input {
    width: 41px;
    margin: 0 3px;
}
.pdf-view {
    padding: 0 12px;
}
.pdfbar > button {
    width: 41px;
}
.pdf-view.off {
    padding: 0 6px;
    color: #777;
}
.pdf-actions {
    margin-left: auto;
    gap: 4px;
}
.viewer {
    flex: 1;
    min-height: 0;
    display: flex;
    background: #282828;
}
.pages {
    flex: 1;
    overflow: hidden;
    padding: 0 45px;
    font-family: "Liberation Serif", serif;
    color: #111;
}
.page {
    display: flow-root;
    background: #fff;
}
.page p {
    margin: 0;
}
.page p span, .sheet p span {
    display: block;
    white-space: nowrap;
    text-align: justify;
    text-align-last: justify;
}
.page p .end, .sheet p .end {
    text-align-last: left;
}
.page sup, .sheet sup {
    font-size: 10px;
    line-height: 1;
}
.sheet sup {
    font-size: 8px;
}
.page.note {
    height: 133px;
    padding: 0 65px 0 81px;
    font-size: 12px;
    line-height: 15px;
    margin-bottom: 14px;
}
.page.note p {
    margin-top: -2px;
}
.page.note .tight {
    font-size: 11px;
}
.page.body {
    position: relative;
    padding: 69px 70px 0 75px;
    font-size: 15px;
    line-height: 18px;
}
.page.body .tight {
    font-size: 14px;
}
.page header {
    display: flex;
    justify-content: space-between;
    font-size: 12px;
    line-height: 16px;
    margin-bottom: 29px;
}
.page .caps {
    font-variant: small-caps;
    font-size: 11px;
}
.page.body p {
    margin-bottom: 18px;
}
.page p .indent {
    padding-left: 18px;
}
.cursor {
    position: absolute;
    left: 139px;
    top: 114px;
}
.scroll {
    width: 15px;
    display: flex;
    flex-direction: column;
    align-items: center;
    background: #fafafa;
    padding: 6px 0;
}
.scroll .up, .scroll .down {
    border: 4px solid transparent;
    border-top: 0;
    border-bottom: 5px solid #858585;
}
.scroll .down {
    border-top: 5px solid #858585;
    border-bottom: 0;
    margin-top: auto;
}
.scroll .thumb {
    width: 9px;
    height: 17px;
    margin-top: 154px;
    border-radius: 4px;
    background: #858585;
}

/* Word */
.word {
    display: flex;
    flex-direction: column;
    min-width: 0;
    min-height: 0;
    background: #e5e5e5;
    overflow: hidden;
    font-size: 11px;
    color: #333;
}
.word-title {
    height: 32px;
    display: flex;
    align-items: center;
    background: #2a5598;
    border-top: 1px solid #40608f;
    color: #b8c8df;
}
.quick {
    display: flex;
    align-items: center;
    margin-left: -6px;
    color: #fff;
}
.quick button:nth-child(2) {
    margin-left: 12px;
}
.quick button:nth-child(3) {
    margin-left: 8px;
}
.quick button:nth-child(4) {
    margin-left: 8px;
}
.quick button:nth-child(5) {
    margin-left: 17px;
}
.word-title .file {
    margin-left: 23px;
    width: 147px;
}
.word-title .user {
    width: 102px;
    white-space: nowrap;
}
.avatar {
    width: 22px;
    height: 22px;
    border-radius: 50%;
    background: #dedede;
    color: #555;
}
.ribbon-tabs {
    height: 29px;
    display: flex;
    align-items: center;
    background: #2a5598;
    color: #fff;
}
.rfile {
    width: 38px;
    justify-content: flex-end;
    padding-right: 12px;
}
.rtab {
    width: 32px;
    height: 20px;
    padding: 0 3px 0 4px;
    border-right: 1px solid #7f99c2;
    justify-content: flex-start;
}
.rtab span {
    overflow: hidden;
    white-space: nowrap;
}
.rtab.current {
    height: 29px;
    background: #f3f3f3;
    color: #2a5598;
}
.tell {
    margin-left: 10px;
    gap: 13px;
}
.share {
    width: 64px;
    height: 22px;
    margin-left: auto;
    padding-left: 3px;
    gap: 4px;
    border: 1px solid #fff;
    border-right: 0;
    justify-content: flex-start;
    font-weight: 600;
}
.more {
    width: 21px;
    height: 29px;
    margin-right: 12px;
    border: 1px solid #fff;
    font-size: 14px;
}
.ribbon {
    height: 87px;
    display: flex;
    background: #f3f3f3;
    border-bottom: 1px solid #d0d0d0;
    padding-top: 3px;
}
.group {
    display: flex;
    flex-direction: column;
    border-right: 1px solid #999;
}
.group .tools {
    display: flex;
    flex: 1;
}
.group .big {
    display: flex;
    flex-direction: column;
    justify-content: flex-start;
    line-height: 15px;
    white-space: nowrap;
}
.toc {
    width: 89px;
    justify-content: space-between;
}
.toc .big {
    width: 60px;
    margin-left: -16px;
    padding-top: 4px;
    gap: 3px;
}
.toc .small {
    margin-left: 6px;
}
.small {
    display: flex;
    flex-direction: column;
    align-items: flex-start;
    gap: 6px;
    padding-top: 3px;
}
.small button {
    gap: 4px;
}
.label {
    display: flex;
    justify-content: flex-end;
    align-items: center;
    line-height: 14px;
    white-space: nowrap;
}
.toc .label {
    padding-right: 11px;
}
.notes {
    width: 114px;
}
.notes .big {
    width: 70px;
    gap: 1px;
}
.notes .label {
    gap: 24px;
    padding-right: 3px;
}
.ab {
    height: 34px;
    padding-top: 10px;
    font-size: 18px;
    font-weight: 600;
    color: #777;
}
.ab sup, .ab-mini sup {
    color: #d9583f;
    font-size: 12px;
    line-height: 1;
}
.ab-mini {
    font-size: 9px;
    font-weight: bold;
    color: #777;
    line-height: 14px;
}
.ab-mini sup {
    font-size: 8px;
}
.next-note {
    position: relative;
}
.next-note .arrow {
    position: absolute;
    left: 9px;
    top: 11px;
}
.boxed {
    gap: 3px;
}
.cites {
    width: 84px;
}
.titles {
    width: 52px;
}
.auth {
    width: 86px;
}
.collapse {
    align-self: flex-end;
    margin: 0 8px 2px auto;
}
.ruler {
    height: 29px;
    display: flex;
    align-items: flex-start;
    padding: 3px 4px 0 7px;
    background: #e5e5e5;
}
.ruler span {
    flex: 1;
    height: 14px;
    display: flex;
    justify-content: center;
    font-size: 9px;
    line-height: 14px;
    font-weight: 600;
    background:
        linear-gradient(#666, #666) 0 5px / 1px 5px no-repeat,
        linear-gradient(#888, #888) 25% 7px / 1px 1px no-repeat,
        linear-gradient(#888, #888) 75% 7px / 1px 1px no-repeat,
        #fff;
}
.ruler .out {
    background-color: #c6c6c6;
}
.ruler .zero {
    background: linear-gradient(to right, #c6c6c6 50%, #fff 50%);
}
.ruler .edge {
    position: relative;
}
.edge svg {
    position: absolute;
    left: -1px;
    top: 6px;
}
.canvas {
    flex: 1;
    min-height: 0;
    padding: 0 16px 17px 0;
}
.sheet {
    height: 100%;
    padding: 51px 69px 0 51px;
    background: #fff;
    border-top: 1px solid #c8c8c8;
    font-family: Lato, "Open Sans", sans-serif;
    color: #111;
    font-size: 11px;
    line-height: 17px;
}
.corners {
    display: flex;
    justify-content: space-between;
    margin: 0 -17px;
}
.corners b {
    width: 17px;
    height: 17px;
    border-right: 1px solid #aaa;
    border-bottom: 1px solid #aaa;
}
.corners b:last-child {
    border-right: 0;
    border-left: 1px solid #aaa;
}
.sheet p {
    margin: 0 0 8px;
}
.corners + p {
    padding-top: 1px;
}
.status {
    height: 20px;
    display: flex;
    align-items: center;
    background: #f3f3f3;
    font-size: 10px;
    white-space: nowrap;
}
.pageno {
    margin-right: 18px;
}
.status > svg {
    margin: 0 17px 0 18px;
    color: #666;
}
.views {
    display: flex;
    margin-left: auto;
    color: #666;
}
.views button {
    width: 38px;
    height: 20px;
}
.views .on {
    background: #c8c8c8;
}
.zoom {
    display: flex;
    align-items: center;
    gap: 5px;
    margin: 0 23px 0 4px;
}
.zoom button {
    font-size: 14px;
}
.zoom span {
    margin-left: 7px;
}
.zoom input {
    appearance: none;
    width: 94px;
    height: 12px;
    background: linear-gradient(#555, #555) 0 50% / 100% 1px no-repeat;
}
.zoom input::-webkit-slider-thumb {
    appearance: none;
    width: 5px;
    height: 11px;
    background: #444;
}

/* Barra de tareas */
.taskbar {
    height: 38px;
    display: flex;
    background: #484848;
    border-top: 1px solid #777;
    color: #fff;
}
.start {
    width: 45px;
}
.search {
    width: 270px;
    display: flex;
    align-items: center;
    padding-left: 11px;
    gap: 11px;
    background: #f2f2f2;
    color: #333;
    font-size: 13px;
}
.search input {
    flex: 1;
}
.search input::placeholder {
    color: #444;
}
.apps {
    display: flex;
    margin-left: 2px;
}
.apps button {
    width: 46px;
}
.apps .open {
    background: linear-gradient(#ea86c8, #ea86c8) 50% 100% / 38px 2px no-repeat;
}
.apps .focus {
    background: linear-gradient(#ea86c8, #ea86c8) 50% 100% / 46px 2px no-repeat, #6c6c6c;
}
.tray {
    margin-left: auto;
    display: flex;
    border-right: 1px solid #777;
    margin-right: 2px;
}
.tray button {
    width: 23px;
}
.tray .lang {
    width: 32px;
    font-size: 11px;
}
.tray .clock {
    width: 65px;
    display: block;
    line-height: 16px;
    text-align: center;
    font-size: 10px;
}
.tray .bell {
    width: 22px;
    margin: 0 16px 0 9px;
}
```
